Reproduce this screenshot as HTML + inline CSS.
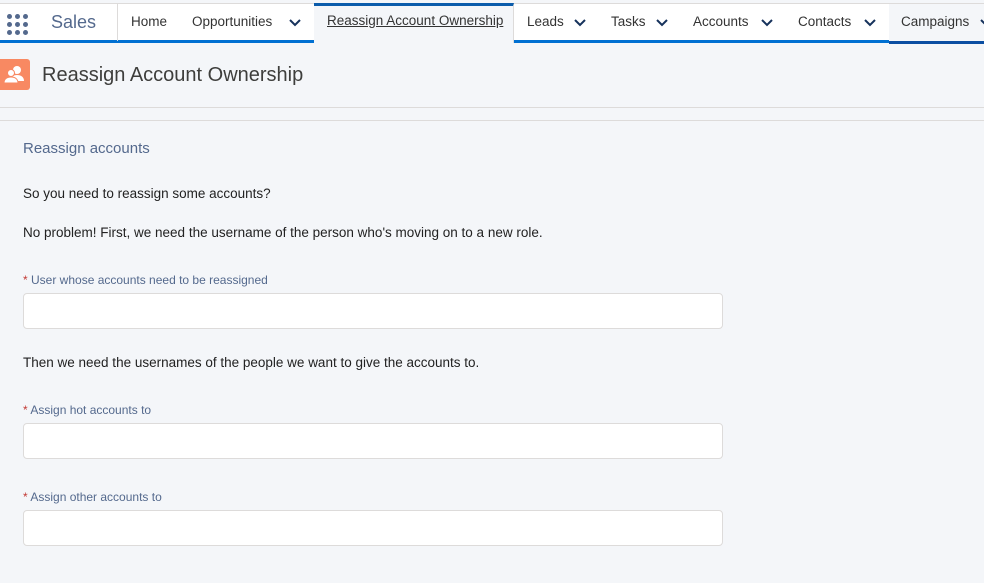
<!DOCTYPE html>
<html><head><meta charset="utf-8"><style>
*{box-sizing:border-box;margin:0;padding:0}
body{width:984px;height:583px;overflow:hidden;background:#f4f6f9;font-family:"Liberation Sans",sans-serif;color:#222;position:relative}
.nav{position:absolute;top:3px;left:0;width:984px;height:40px;background:#fff;border-top:1px solid #dddbda;border-bottom:3px solid #0070d2}
.dots{position:absolute;left:7px;top:10px;width:22px;height:22px}
.dots i{position:absolute;width:5px;height:5px;border-radius:50%;background:#54698d}
.app{position:absolute;left:51px;top:8px;font-size:18px;color:#54698d}
.sep{position:absolute;left:117px;top:0;height:37px;border-left:1px solid #dddbda}
.tab{position:absolute;top:0;height:37px;line-height:36px;font-size:13.5px;color:#333}
.tab svg{position:absolute;top:14px}
.active{background:#f4f6f9;border-top:3px solid #0b5cab;height:40px;top:0;line-height:30px;text-decoration:underline;border-right:1px solid #dddbda}
.camp{background:#f4f6f9;border-bottom:3px solid #0b4ea2;height:40px}
.icon{position:absolute;left:0;top:59px;width:30px;height:31px;background:#f88962;border-radius:0 3px 3px 0}
.title{position:absolute;left:42px;top:64px;font-size:20px;color:#3e3e3c}
.l1{position:absolute;top:107px;left:0;width:984px;border-top:1px solid #dddbda}
.l2{position:absolute;top:120px;left:0;width:984px;border-top:1px solid #dddbda}
.t{position:absolute;left:23px;font-size:13.5px}
.lab{position:absolute;left:23px;font-size:12px;color:#54698d}
.lab b{color:#c23934;font-weight:normal}
.in{position:absolute;left:23px;width:700px;height:36px;background:#fff;border:1px solid #dddbda;border-radius:4px}
</style></head><body>
<div class="nav">
<div class="dots"><i style="left:0;top:0"></i><i style="left:8px;top:0"></i><i style="left:16px;top:0"></i><i style="left:0;top:8px"></i><i style="left:8px;top:8px"></i><i style="left:16px;top:8px"></i><i style="left:0;top:16px"></i><i style="left:8px;top:16px"></i><i style="left:16px;top:16px"></i></div>
<div class="app">Sales</div>
<div class="sep"></div>
<div class="tab" style="left:131px">Home</div>
<div class="tab" style="left:192px">Opportunities<svg style="left:96px" width="14" height="10" viewBox="0 0 14 10"><path d="M2 2l5 5 5-5" stroke="#16325c" stroke-width="2" fill="none"/></svg></div>
<div class="tab active" style="left:314px;width:200px;padding-left:13px;top:-1px">Reassign Account Ownership</div>
<div class="tab" style="left:527px">Leads<svg style="left:46px" width="14" height="10" viewBox="0 0 14 10"><path d="M2 2l5 5 5-5" stroke="#16325c" stroke-width="2" fill="none"/></svg></div>
<div class="tab" style="left:611px">Tasks<svg style="left:44px" width="14" height="10" viewBox="0 0 14 10"><path d="M2 2l5 5 5-5" stroke="#16325c" stroke-width="2" fill="none"/></svg></div>
<div class="tab" style="left:693px">Accounts<svg style="left:67px" width="14" height="10" viewBox="0 0 14 10"><path d="M2 2l5 5 5-5" stroke="#16325c" stroke-width="2" fill="none"/></svg></div>
<div class="tab" style="left:798px">Contacts<svg style="left:65px" width="14" height="10" viewBox="0 0 14 10"><path d="M2 2l5 5 5-5" stroke="#16325c" stroke-width="2" fill="none"/></svg></div>
<div class="tab camp" style="left:889px;width:95px;padding-left:12px">Campaigns<svg style="left:90px" width="14" height="10" viewBox="0 0 14 10"><path d="M2 2l5 5 5-5" stroke="#16325c" stroke-width="2" fill="none"/></svg></div>
</div>
<div class="icon"><svg width="30" height="31" viewBox="0 0 30 31"><circle cx="17" cy="11" r="4" fill="#fff"/><path d="M10 22c0-4 3-6 7-6s7 2 7 6z" fill="#fff"/><circle cx="11" cy="14" r="3.5" fill="#fff" stroke="#f88962" stroke-width="1"/><path d="M4 24c0-4 3-6 7-6s7 2 7 6z" fill="#fff" stroke="#f88962" stroke-width="1"/></svg></div>
<div class="title">Reassign Account Ownership</div>
<div class="l1"></div><div class="l2"></div>
<div class="t" style="top:140px;font-size:15px;color:#54698d">Reassign accounts</div>
<div class="t" style="top:186px">So you need to reassign some accounts?</div>
<div class="t" style="top:225px">No problem! First, we need the username of the person who's moving on to a new role.</div>
<div class="lab" style="top:273px"><b>*</b> User whose accounts need to be reassigned</div>
<div class="in" style="top:293px"></div>
<div class="t" style="top:355px">Then we need the usernames of the people we want to give the accounts to.</div>
<div class="lab" style="top:403px"><b>*</b> Assign hot accounts to</div>
<div class="in" style="top:423px"></div>
<div class="lab" style="top:490px"><b>*</b> Assign other accounts to</div>
<div class="in" style="top:510px"></div>
</body></html>
